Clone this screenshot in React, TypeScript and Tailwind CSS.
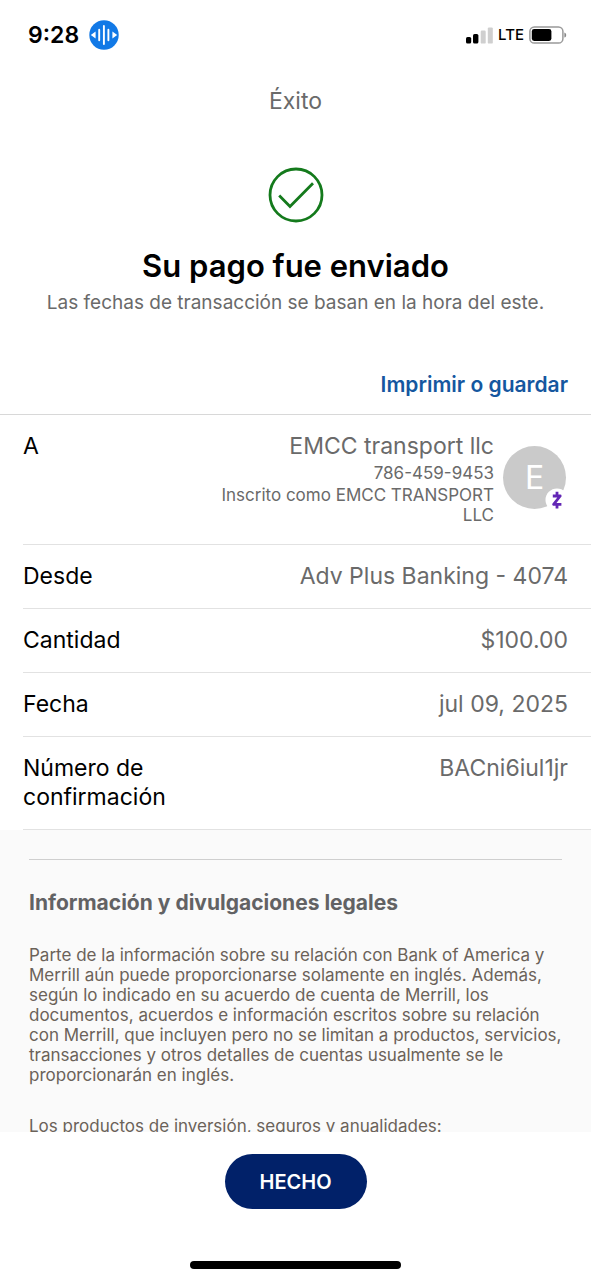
import type { ReactNode } from "react";

function StatusBar() {
  return (
    <div className="flex h-[70px] shrink-0 items-center justify-between pr-6 pl-7">
      <div className="flex items-center gap-[10px]">
        <span className="text-[23px] font-semibold">9:28</span>
        <svg className="size-[30px]" viewBox="0 0 30 30" aria-hidden="true">
          <circle cx="15" cy="15" r="14.7" fill="#1279e6" />
          <path d="M6.6 11.6v6.8L1.8 15zM23.4 11.6v6.8l4.8-3.4z" fill="#fff" />
          <path
            d="M10.2 9.8v10.4M14.9 6v18M19.4 9.8v10.4"
            stroke="#fff"
            strokeWidth="1.9"
            strokeLinecap="round"
          />
        </svg>
      </div>
      <div className="flex items-center gap-[5px]">
        <svg className="h-[17px] w-[27px]" viewBox="0 0 27 17" aria-hidden="true">
          <rect x="0" y="10" width="5.2" height="6.6" rx="1.6" />
          <rect x="7" y="7" width="5.4" height="9.6" rx="1.6" />
          <rect x="14.7" y="3.6" width="5" height="13" rx="1.2" fill="#cfcfcf" />
          <rect x="21.8" y="0.4" width="5" height="16.2" rx="1.2" fill="#cfcfcf" />
        </svg>
        <span className="text-[15px] font-medium">LTE</span>
        <svg className="h-[18px] w-[38px]" viewBox="0 0 38 18" aria-hidden="true">
          <rect x="0.9" y="0.9" width="33" height="16.2" rx="4.4" fill="none" stroke="#999" strokeWidth="1.5" />
          <rect x="2.8" y="3" width="19.6" height="12" rx="2.4" />
          <path d="M35.4 6.4c2.4.8 2.4 4.4 0 5.2z" fill="#888" />
        </svg>
      </div>
    </div>
  );
}

function Row({ label, children }: { label: ReactNode; children: ReactNode }) {
  return (
    <div className="ml-[23px] flex justify-between gap-4 border-b border-[#e2e2e2] py-[17px] pr-[23px] text-[23px] leading-[29px]">
      <dt className="max-w-[180px]">{label}</dt>
      <dd className="text-right text-[#6a6a6a]">{children}</dd>
    </div>
  );
}

function Avatar() {
  return (
    <div className="relative mt-[14px] mr-[2px] flex size-[63px] shrink-0 items-center justify-center rounded-full bg-[#cacaca] text-[32px] text-white">
      E
      <svg className="absolute -right-[3px] -bottom-[3px] size-[24px]" viewBox="0 0 24 24" aria-hidden="true">
        <circle cx="12" cy="12" r="11.5" fill="#fff" />
        <path
          d="M7.8 8h7.4L8.6 16.4h7.8M12 3.8V8M12 16.4v4"
          fill="none"
          stroke="#6327b5"
          strokeWidth="2.8"
          strokeLinejoin="round"
        />
      </svg>
    </div>
  );
}

export default function App() {
  return (
    <div className="flex h-dvh flex-col bg-white font-['Inter','Liberation_Sans',sans-serif] text-black">
      <StatusBar />
      <main className="min-h-0 flex-1 overflow-y-auto [scrollbar-width:none]">
        <div className="flex flex-col items-center text-center">
          <p className="mt-4 text-[23px] leading-[30px] text-[#6a6a6a]">Éxito</p>
          <svg className="mt-[51px] size-[56px]" viewBox="0 0 56 56" fill="none" stroke="#147a1c" aria-hidden="true">
            <circle cx="28" cy="28" r="26" strokeWidth="2.8" />
            <path d="M11.2 28.4 22 39.4 45 16.2" strokeWidth="2.8" />
          </svg>
          <h1 className="mt-[23px] text-[31px] leading-10 font-semibold">Su pago fue enviado</h1>
          <p className="mt-[5px] text-[19px] leading-6 text-[#6a6a6a]">
            Las fechas de transacción se basan en la hora del este.
          </p>
        </div>
        <div className="flex justify-end border-b border-[#d8d8d8] pt-[55px] pr-[23px] pb-[14px]">
          <a href="#imprimir" className="text-[21px] leading-[30px] font-semibold text-[#15579f]">
            Imprimir o guardar
          </a>
        </div>
        <dl>
          <Row label="A">
            <div className="flex gap-[9px] pb-[2px]">
              <div className="max-w-[290px]">
                <div>EMCC transport llc</div>
                <div className="text-[17px] leading-6">786-459-9453</div>
                <div className="text-[17px] leading-5">
                  Inscrito como EMCC TRANSPORT LLC
                </div>
              </div>
              <Avatar />
            </div>
          </Row>
          <Row label="Desde">Adv Plus Banking - 4074</Row>
          <Row label="Cantidad">$100.00</Row>
          <Row label="Fecha">jul 09, 2025</Row>
          <Row label="Número de confirmación">BACni6iul1jr</Row>
        </dl>
        <section className="bg-[#fafafa] px-[29px] pt-[29px] text-[17px] leading-5 text-[#6b6259]">
          <hr className="border-[#cfcfcf]" />
          <h2 className="mt-[28px] text-[21px] leading-[30px] font-bold text-[#626264]">
            Información y divulgaciones legales
          </h2>
          <p className="mt-[27px]">
            Parte de la información sobre su relación con Bank of America y Merrill aún puede proporcionarse
            solamente en inglés. Además, según lo indicado en su acuerdo de cuenta de Merrill, los documentos,
            acuerdos e información escritos sobre su relación con Merrill, que incluyen pero no se limitan a
            productos, servicios, transacciones y otros detalles de cuentas usualmente se le proporcionarán en
            inglés.
          </p>
          <p className="mt-[31px]">Los productos de inversión, seguros y anualidades:</p>
        </section>
      </main>
      <footer className="flex shrink-0 flex-col items-center bg-white pt-[22px] pb-[11px]">
        <button
          type="button"
          className="h-[55px] w-[142px] rounded-full bg-[#012169] text-[20px] font-semibold text-white"
        >
          HECHO
        </button>
        <div className="mt-[52px] h-2 w-[211px] rounded-full bg-black" />
      </footer>
    </div>
  );
}
